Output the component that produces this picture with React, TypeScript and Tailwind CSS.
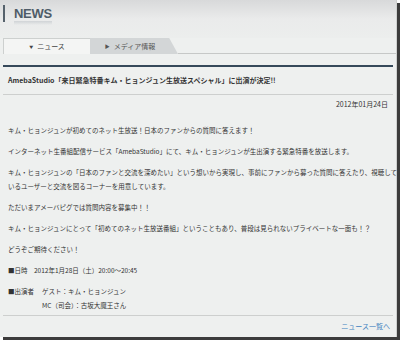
const jp = "font-['Noto_Sans_CJK_JP','Noto_Sans',sans-serif]";

const Para = ({ children }: { children: React.ReactNode }) => {
  return <p className="mb-[7px] whitespace-nowrap leading-[14px]">{children}</p>;
};

const App = () => {
  return (
    <div className="w-[400px] h-[340px] bg-white">
      <div className={`w-[397px] h-[337px] bg-[#eef0ef] border-r border-[#cfd1d0] shadow-[3px_3px_0_#3c3c3c] flex flex-col ${jp}`}>
        {/* header */}
        <div className="h-[38px] bg-gradient-to-b from-[#d8d9da] via-[#eaebeb] via-50% to-[#eceeed] pl-[3px] pt-[5px]">
          <div className="flex items-start">
            <div className="w-[2px] h-[17px] bg-[#56626c]"></div>
            <div className="ml-[9px] flex flex-col">
              <span className="font-['Liberation_Sans',sans-serif] font-bold text-[13px] leading-[13px] text-[#4f5c68] tracking-[-0.3px] pt-[2px]">NEWS</span>
              <div className="mt-[1px] w-[38px] h-[4px] bg-gradient-to-b from-[#c4c9cd] to-transparent opacity-70"></div>
            </div>
          </div>
        </div>

        {/* tabs */}
        <div className="flex h-[16px] pl-[3px] text-[7px]">
          <div className="w-[87px] h-[16px] bg-[#f4f5f4] border-l border-t border-[#cdd0cf] flex items-center justify-center text-[#444]">
            <span className="text-[4px] mr-[4px]">▼</span>ニュース
          </div>
          <div className="w-[88px] h-[16px] bg-[#d3d6d7] [clip-path:polygon(0_0,90%_0,100%_100%,0_100%)] flex items-center justify-center pr-[8px] text-[#555]">
            <span className="text-[5px] mr-[4px]">▶</span>メディア情報
          </div>
          <div className="flex-1 border-b border-[#c6c8c7]"></div>
        </div>

        {/* dark rule */}
        <div className="mx-[3px] mt-[11px] h-[2px] bg-[#36495a]"></div>

        {/* title */}
        <div className="mx-[3px] mt-[6px] h-[22px] border-b border-[#cdcfce] pl-[5px]">
          <p className="text-[7px] leading-[14px] font-bold text-[#333] whitespace-nowrap">
            AmebaStudio「来日緊急特番キム・ヒョンジュン生放送スペシャル」に出演が決定!!
          </p>
        </div>

        {/* date */}
        <div className="mt-[2px] pr-[8px] text-right text-[7px] leading-[14px] text-[#333]">2012年01月24日</div>

        {/* body */}
        <div className="mt-[12px] pl-[8px] text-[6.5px] text-[#333]">
          <Para>キム・ヒョンジュンが初めてのネット生放送！日本のファンからの質問に答えます！</Para>
          <Para>インターネット生番組配信サービス「AmebaStudio」にて、キム・ヒョンジュンが生出演する緊急特番を放送します。</Para>
          <Para>
            キム・ヒョンジュンの「日本のファンと交流を深めたい」という想いから実現し、事前にファンから募った質問に答えたり、視聴して
            <br />
            いるユーザーと交流を図るコーナーを用意しています。
          </Para>
          <Para>ただいまアメーバピグでは質問内容を募集中！！</Para>
          <Para>キム・ヒョンジュンにとって「初めてのネット生放送番組」ということもあり、普段は見られないプライベートな一面も！？</Para>
          <Para>どうぞご期待ください！</Para>
          <Para>■日時　2012年1月28日（土）20:00～20:45</Para>
          <div className="flex whitespace-nowrap leading-[14px]">
            <span className="w-[34px]">■出演者</span>
            <div className="flex flex-col">
              <span>ゲスト：キム・ヒョンジュン</span>
              <span>MC（司会）：古坂大魔王さん</span>
            </div>
          </div>
        </div>

        <div className="mx-[3px] mt-[3px] h-[1px] bg-[#cdcfce]"></div>
        <div className="mt-[3px] pr-[6px] text-right text-[7px] leading-[14px] text-[#3f82c0]">ニュース一覧へ</div>
      </div>
    </div>
  );
};

export default App;
